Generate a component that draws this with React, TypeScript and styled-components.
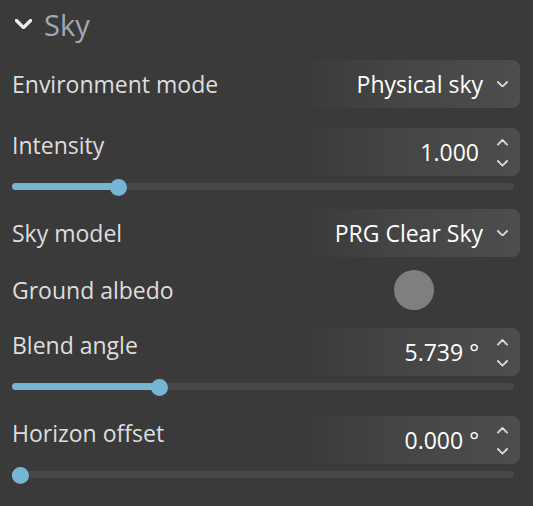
import { createGlobalStyle, styled } from "styled-components";

const GlobalStyle = createGlobalStyle`
    html, body {
        margin: 0;
        padding: 0;
        background: #3a3a3a;
    }
    body {
        font-family: "Open Sans", "Noto Sans", sans-serif;
    }
`

const Panel = styled.div`
    display: flex;
    flex-direction: column;
    width: 533px;
    height: 506px;
    padding: 0 13px 0 12px;
    box-sizing: border-box;
    background: #3a3a3a;
    color: #dcdcdc;
    overflow: hidden;
`

const SectionHeader = styled.div`
    display: flex;
    align-items: center;
    gap: 12px;
    height: 48px;
    padding-left: 3px;
    font-size: 29px;
    color: #9fa9b3;
`

const Row = styled.div<{ $mt: number }>`
    display: grid;
    grid-template-columns: 1fr 220px;
    align-items: center;
    margin-top: ${(p) => p.$mt}px;
    height: 48px;
`

const Label = styled.div<{ $top?: boolean }>`
    font-size: 23px;
    color: #dedede;
    white-space: nowrap;
    align-self: ${(p) => (p.$top ? "start" : "center")};
    margin-top: ${(p) => (p.$top ? "1px" : "0")};
`

const Field = styled.div<{ $gap: number }>`
    display: flex;
    align-items: center;
    justify-content: flex-end;
    gap: ${(p) => p.$gap}px;
    height: 48px;
    padding-right: 12px;
    border-radius: 8px;
    background: linear-gradient(to right, rgba(75, 75, 75, 0) 0%, #454545 45%, #4d4d4d 100%);
    font-size: 23px;
    color: #ffffff;
    white-space: nowrap;
`

const Swatch = styled.div`
    justify-self: center;
    width: 40px;
    height: 40px;
    margin-left: 8px;
    border-radius: 50%;
    background: #7f7f7f;
`

const Track = styled.div`
    position: relative;
    height: 7px;
    margin-top: 7px;
    margin-right: 6px;
    border-radius: 4px;
    background: #474747;
`

const Fill = styled.div`
    position: absolute;
    left: 0;
    top: 0;
    bottom: 0;
    border-radius: 4px;
    background: #76b5d3;
`

const Thumb = styled.div`
    position: absolute;
    top: 50%;
    width: 17px;
    height: 17px;
    margin-left: -8px;
    margin-top: -8px;
    border-radius: 50%;
    background: #76b5d3;
`

const Spinner = styled.div`
    display: flex;
    flex-direction: column;
    gap: 14px;
    margin-top: 2px;
`

function Chevron({ size = 12, color = "#d8d8d8", up = false, weight = 2 }) {
    return (
        <svg width={size} height={size * 0.6} viewBox="0 0 12 7" style={{ display: "block" }}>
            <path
                d={up ? "M1 6 L6 1 L11 6" : "M1 1 L6 6 L11 1"}
                fill="none"
                stroke={color}
                strokeWidth={weight}
                strokeLinecap="round"
                strokeLinejoin="round"
            />
        </svg>
    )
}

function Select({ value }: { value: string }) {
    return (
        <Field $gap={14}>
            <span>{value}</span>
            <Chevron size={11} />
        </Field>
    )
}

function NumberField({ value }: { value: string }) {
    return (
        <Field $gap={18}>
            <span>{value}</span>
            <Spinner>
                <Chevron size={11} up />
                <Chevron size={11} />
            </Spinner>
        </Field>
    )
}

function Slider({ fraction }: { fraction: number }) {
    // thumb centre runs from 8px to (width - 8px)
    const pos = `calc(8px + (100% - 16px) * ${fraction})`
    return (
        <Track>
            <Fill style={{ width: pos }} />
            <Thumb style={{ left: pos }} />
        </Track>
    )
}

export default function App() {
    return (
        <>
            <GlobalStyle />
            <Panel>
                <SectionHeader>
                    <Chevron size={17} color="#ececec" weight={2.4} />
                    <span>Sky</span>
                </SectionHeader>

                <Row $mt={12}>
                    <Label>Environment mode</Label>
                    <Select value="Physical sky" />
                </Row>

                <Row $mt={20}>
                    <Label $top>Intensity</Label>
                    <NumberField value="1.000" />
                </Row>
                <Slider fraction={0.202} />

                <Row $mt={19}>
                    <Label>Sky model</Label>
                    <Select value="PRG Clear Sky" />
                </Row>

                <Row $mt={9}>
                    <Label>Ground albedo</Label>
                    <Swatch />
                </Row>

                <Row $mt={14}>
                    <Label $top>Blend angle</Label>
                    <NumberField value="5.739 °" />
                </Row>
                <Slider fraction={0.285} />

                <Row $mt={26}>
                    <Label $top>Horizon offset</Label>
                    <NumberField value="0.000 °" />
                </Row>
                <Slider fraction={0} />
            </Panel>
        </>
    )
}
